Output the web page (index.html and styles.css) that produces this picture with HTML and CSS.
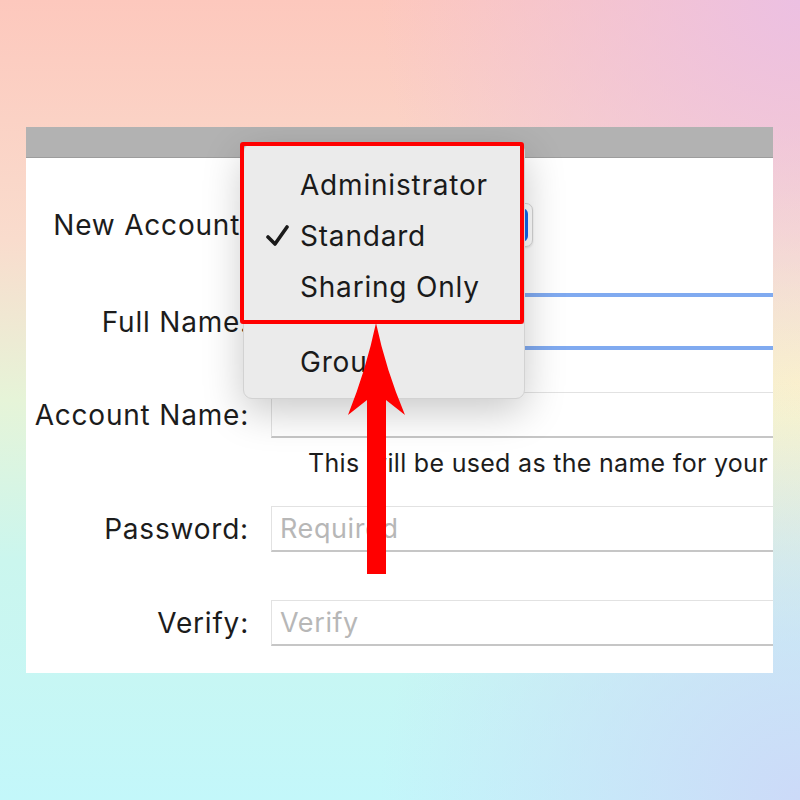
FILE: index.html
```html
<!DOCTYPE html>
<html lang="en">
<head>
  <meta charset="UTF-8">
  <meta name="viewport" content="width=device-width, initial-scale=1.0">
  <title>New Account</title>
  <link rel="stylesheet" href="styles.css">
</head>
<body>

<div class="window">
  <div class="titlebar"></div>

  <div class="form">
    <div class="row row-type">
      <label class="label">New Account:</label>
      <div class="popup">
        <span class="popup-value">Standard</span>
        <span class="popup-arrows"></span>
      </div>
    </div>

    <div class="row row-fullname">
      <label class="label">Full Name:</label>
      <div class="field focused"></div>
    </div>

    <div class="row row-account">
      <label class="label">Account Name:</label>
      <div class="field"></div>
    </div>

    <div class="row row-help">
      <span></span>
      <p class="help">This will be used as the name for your home folder.</p>
    </div>

    <div class="row row-password">
      <label class="label">Password:</label>
      <div class="field"><span class="placeholder">Required</span></div>
    </div>

    <div class="row row-verify">
      <label class="label">Verify:</label>
      <div class="field"><span class="placeholder">Verify</span></div>
    </div>
  </div>

  <!-- popup menu opened over the form -->
  <div class="menu">
    <div class="menu-item"><span class="check"></span>Administrator</div>
    <div class="menu-item">
      <span class="check">
        <svg width="23" height="21" viewBox="0 0 23 21"><path d="M2 12 L9 19 L21 2" fill="none" stroke="#1a1a1a" stroke-width="3.6" stroke-linecap="round" stroke-linejoin="round"/></svg>
      </span>Standard
    </div>
    <div class="menu-item"><span class="check"></span>Sharing Only</div>
    <div class="menu-sep"></div>
    <div class="menu-item"><span class="check"></span>Group</div>
  </div>

  <div class="highlight"></div>
</div>

<svg class="arrow" width="70" height="260" viewBox="0 0 70 260">
  <path d="M36 3 Q46 50 65 95 L46 80 L46 254 L27 254 L27 80 L8 95 Q26 50 36 3 Z" fill="#ff0000"/>
</svg>

</body>
</html>
```

FILE: styles.css
```css
body {
  margin: 0;
  width: 800px;
  height: 800px;
  position: relative;
  overflow: hidden;
  font-family: Inter, "Noto Sans", sans-serif;
  color: #1c1c1c;
  background:
    radial-gradient(circle at 100% 0%, rgba(236, 192, 226, 1) 0, rgba(236, 192, 226, 0) 420px),
    radial-gradient(circle at 100% 100%, rgba(204, 218, 248, 1) 0, rgba(204, 218, 248, 0) 420px),
    radial-gradient(circle at 100% 48%, rgba(251, 244, 204, 1) 0, rgba(251, 244, 204, 0) 260px),
    linear-gradient(180deg, #fdc8bd 0%, #f9dccd 30%, #e6f4d8 50%, #cbf6ee 70%, #c3f7fa 100%);
  padding: 127px 0 0 26px;
  box-sizing: border-box;
}

.window {
  position: relative;
  width: 747px;
  height: 546px;
  background: #ffffff;
  overflow: hidden;
}

.titlebar {
  height: 30px;
  background: #b2b2b2;
  border-bottom: 1px solid #9d9d9d;
}

.form {
  padding-top: 42px;
}

.row {
  display: grid;
  grid-template-columns: 223px 1fr;
  column-gap: 22px;
  align-items: center;
}

.label {
  font-size: 28px;
  letter-spacing: 0.8px;
  text-align: right;
  white-space: nowrap;
}

.row-type { height: 50px; }
.row-fullname { height: 49px; margin-top: 47px; }
.row-account { height: 46px; margin-top: 46px; }
.row-help { height: 30px; margin-top: 10px; }
.row-password { height: 46px; margin-top: 28px; }
.row-verify { height: 46px; margin-top: 48px; }

.popup {
  width: 262px;
  height: 44px;
  box-sizing: border-box;
  border: 1px solid #d4d4d4;
  border-radius: 7px;
  display: flex;
  align-items: center;
  justify-content: space-between;
  padding: 0 4px 0 12px;
  font-size: 26px;
  box-shadow: 0 1px 2px rgba(0, 0, 0, 0.12);
}

.popup-arrows {
  width: 22px;
  height: 34px;
  background: #1366e8;
  border-radius: 6px;
}

.field {
  height: 100%;
  box-sizing: border-box;
  border-top: 1px solid #e2e2e2;
  border-left: 1px solid #e2e2e2;
  border-bottom: 2px solid #c6c6c6;
  display: flex;
  align-items: center;
  padding-left: 8px;
}

.field.focused {
  border: none;
  box-shadow: 0 0 0 4px #80aaf0;
}

.placeholder {
  font-size: 27px;
  letter-spacing: 0.6px;
  color: #b7b7b7;
}

.help {
  margin: 0;
  padding-left: 37px;
  font-size: 25px;
  letter-spacing: 0.3px;
  white-space: nowrap;
}

.menu {
  position: absolute;
  left: 217px;
  top: 16px;
  width: 282px;
  box-sizing: border-box;
  padding: 15px 0 11px;
  background: #ebebeb;
  border: 1px solid #d2d2d2;
  border-radius: 9px;
  box-shadow: 0 12px 40px rgba(0, 0, 0, 0.22);
}

.menu-item {
  height: 51px;
  display: flex;
  align-items: center;
  padding-left: 22px;
  font-size: 28px;
  letter-spacing: 0.8px;
  color: #1a1a1a;
  white-space: nowrap;
}

.check {
  width: 23px;
  height: 21px;
  margin-right: 11px;
  display: flex;
}

.menu-sep {
  height: 1px;
  background: #d3d3d3;
  margin: 11px 0 12px;
}

.highlight {
  position: absolute;
  left: 214px;
  top: 15px;
  width: 284px;
  height: 182px;
  box-sizing: border-box;
  border: 4px solid #ff0000;
  border-radius: 3px;
}

.arrow {
  position: absolute;
  left: 340px;
  top: 320px;
}
```
